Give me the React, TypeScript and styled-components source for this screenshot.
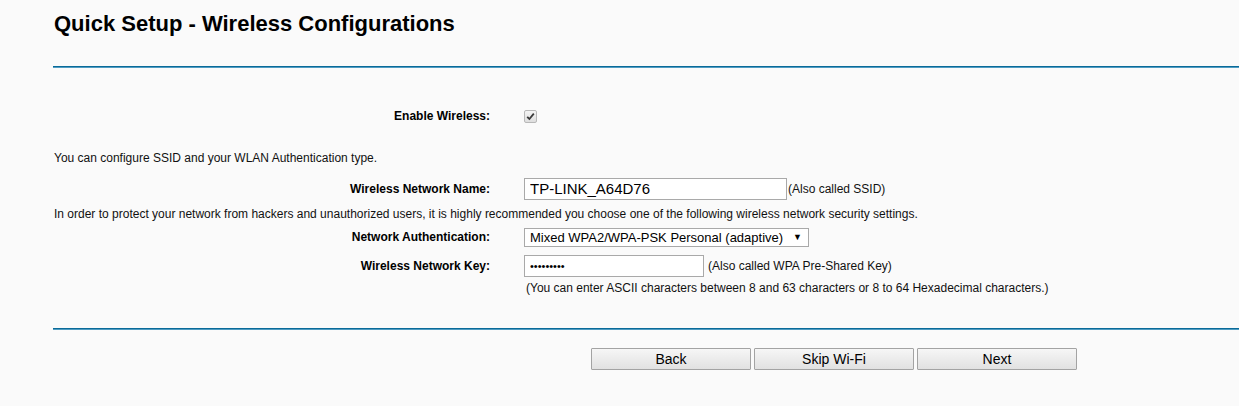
import React from "react";
import styled, { createGlobalStyle } from "styled-components";

const Global = createGlobalStyle`
  html, body { margin: 0; padding: 0; background: #fafafa; }
  body { font-family: "Liberation Sans", Arial, sans-serif; color: #000; }
`;

const Page = styled.div`
  width: 1239px;
  height: 406px;
  padding-left: 53px;
  box-sizing: border-box;
  background: #fafafa;
  overflow: hidden;
`;

const Title = styled.h1`
  margin: 0;
  padding: 11px 0 0 1px;
  height: 66px;
  box-sizing: border-box;
  font-size: 22px;
  line-height: 26px;
  font-weight: bold;
  color: #000;
`;

const Rule = styled.div<{ $top?: number }>`
  margin-top: ${(p) => p.$top ?? 0}px;
  height: 1px;
  background: #0a6a98;
  border-bottom: 1px solid #4f9cc2;
`;

const Form = styled.div`
  display: flex;
  flex-direction: column;
`;

const Row = styled.div<{ $top: number; $h: number }>`
  display: flex;
  align-items: center;
  margin-top: ${(p) => p.$top}px;
  height: ${(p) => p.$h}px;
`;

const Label = styled.div`
  width: 471px;
  padding-right: 34px;
  box-sizing: border-box;
  text-align: right;
  font-size: 12px;
  font-weight: bold;
  color: #000;
  flex-shrink: 0;
`;

const Info = styled.div<{ $indent?: number }>`
  padding-left: ${(p) => p.$indent ?? 1}px;
  font-size: 12px;
  color: #111;
  white-space: nowrap;
`;

const Note = styled.span<{ $gap: number }>`
  margin-left: ${(p) => p.$gap}px;
  font-size: 12px;
  color: #111;
  white-space: nowrap;
`;

const Check = styled.span`
  width: 11px;
  height: 11px;
  border: 1px solid #b8b8b8;
  border-radius: 2px;
  background: linear-gradient(#f4f4f4, #dedede);
  display: inline-flex;
  align-items: center;
  justify-content: center;
`;

const TextInput = styled.input<{ $w: number; $size?: number }>`
  width: ${(p) => p.$w}px;
  height: 22px;
  box-sizing: border-box;
  border: 1px solid #a9a9a9;
  background: #fff;
  padding: 0 5px;
  margin: 0;
  font-family: "Liberation Sans", Arial, sans-serif;
  font-size: ${(p) => p.$size ?? 15}px;
  color: #000;
  outline: none;
`;

const SelectBox = styled.div`
  display: flex;
  align-items: center;
  width: 285px;
  height: 19px;
  box-sizing: border-box;
  border: 1px solid #a9a9a9;
  background: #fff;
`;

const Select = styled.select`
  appearance: none;
  -webkit-appearance: none;
  border: none;
  background: transparent;
  padding: 0 0 0 5px;
  margin: 0;
  font-family: "Liberation Sans", Arial, sans-serif;
  font-size: 13px;
  color: #000;
  outline: none;
  flex: 1;
  height: 17px;
  line-height: 17px;
`;

const Arrow = styled.span`
  font-size: 9px;
  color: #000;
  padding-right: 6px;
`;

const Buttons = styled.div`
  display: flex;
  gap: 3px;
  margin-top: 18px;
  padding-left: 538px;
`;

const Button = styled.button`
  width: 160px;
  height: 22px;
  box-sizing: border-box;
  border: 1px solid #a3a3a3;
  border-radius: 1px;
  background: linear-gradient(#f6f6f6, #e1e1e1);
  font-family: "Liberation Sans", Arial, sans-serif;
  font-size: 14px;
  color: #000;
  padding: 0;
  cursor: pointer;
`;

export default function App() {
  return (
    <Page>
      <Global />
      <Title>Quick Setup - Wireless Configurations</Title>
      <Rule />
      <Form>
        <Row $top={37} $h={22}>
          <Label>Enable Wireless:</Label>
          <Check>
            <svg width="9" height="9" viewBox="0 0 9 9">
              <path d="M1.2 4.8 L3.4 7 L7.8 1.6" fill="none" stroke="#3a3a3a" strokeWidth="1.8" />
            </svg>
          </Check>
        </Row>
        <Row $top={23} $h={16}>
          <Info>You can configure SSID and your WLAN Authentication type.</Info>
        </Row>
        <Row $top={11} $h={23}>
          <Label>Wireless Network Name:</Label>
          <TextInput $w={263} defaultValue="TP-LINK_A64D76" />
          <Note $gap={1}>(Also called SSID)</Note>
        </Row>
        <Row $top={6} $h={16}>
          <Info>
            In order to protect your network from hackers and unauthorized users, it is highly recommended you choose one of the following wireless network security settings.
          </Info>
        </Row>
        <Row $top={5} $h={20}>
          <Label>Network Authentication:</Label>
          <SelectBox>
            <Select defaultValue="mixed">
              <option value="mixed">Mixed WPA2/WPA-PSK Personal (adaptive)</option>
            </Select>
            <Arrow>▼</Arrow>
          </SelectBox>
        </Row>
        <Row $top={7} $h={23}>
          <Label>Wireless Network Key:</Label>
          <TextInput $w={180} $size={11} type="password" defaultValue="123456789" />
          <Note $gap={4}>(Also called WPA Pre-Shared Key)</Note>
        </Row>
        <Row $top={2} $h={18}>
          <Info $indent={473}>
            (You can enter ASCII characters between 8 and 63 characters or 8 to 64 Hexadecimal characters.)
          </Info>
        </Row>
      </Form>
      <Rule $top={31} />
      <Buttons>
        <Button>Back</Button>
        <Button>Skip Wi-Fi</Button>
        <Button>Next</Button>
      </Buttons>
    </Page>
  );
}
